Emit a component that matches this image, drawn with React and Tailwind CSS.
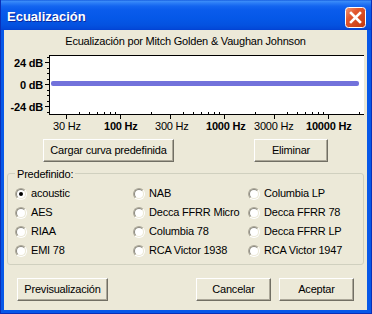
import React from "react";

const fx = (f) => 116 + 104 * Math.log10(f / 100);
const MAJOR = [30, 100, 300, 1000, 3000, 10000];
const MINOR = [40, 50, 60, 70, 80, 90, 200, 400, 500, 600, 700, 800, 900, 2000, 4000, 5000, 6000, 7000, 8000, 9000, 20000];
const LEFT_MAJOR = [8, 30, 52];
const LEFT_MINOR = [3, 14, 19, 25, 36, 41, 47, 58];

function Chart() {
  return (
    <div className="relative mt-[6px] h-[80px]">
      <svg width="363" height="80" className="absolute left-0 top-0">
        <rect x="45" y="1" width="315" height="60" fill="#fff" />
        <rect x="45" y="1" width="315" height="1" fill="#000" />
        <rect x="45" y="1" width="1" height="60" fill="#000" />
        <rect x="45" y="60" width="315" height="1" fill="#000" />
        {LEFT_MAJOR.map((y) => (
          <rect key={"lm" + y} x="41" y={y} width="4" height="1" fill="#000" />
        ))}
        {LEFT_MINOR.map((y) => (
          <rect key={"ln" + y} x="43" y={y} width="2" height="1" fill="#000" />
        ))}
        {MAJOR.map((f) => (
          <rect key={"bm" + f} x={Math.round(fx(f))} y="61" width="1" height="4" fill="#000" />
        ))}
        {MINOR.map((f) => (
          <rect key={"bn" + f} x={Math.round(fx(f))} y="58" width="1" height="2" fill="#000" />
        ))}
        <rect x="47" y="27" width="308" height="5" rx="2" fill="#7272DB" />
      </svg>
      <div className="absolute left-0 top-0 w-[39px] flex flex-col items-end font-bold leading-[13px]">
        <span className="mt-[3px]">24 dB</span>
        <span className="mt-[9px]">0 dB</span>
        <span className="mt-[9px]">-24 dB</span>
      </div>
      <span className="absolute top-[66px] left-[49px] leading-[13px]">30 Hz</span>
      <span className="absolute top-[66px] left-[100px] leading-[13px] font-bold">100 Hz</span>
      <span className="absolute top-[66px] left-[151px] leading-[13px]">300 Hz</span>
      <span className="absolute top-[66px] left-[202px] leading-[13px] font-bold">1000 Hz</span>
      <span className="absolute top-[66px] left-[250px] leading-[13px]">3000 Hz</span>
      <span className="absolute top-[66px] left-[302px] leading-[13px] font-bold">10000 Hz</span>
    </div>
  );
}

function Btn({ children, className }) {
  return (
    <div
      className={
        "h-[23px] flex items-center justify-center bg-[#ECE9D8] border border-t-white border-l-white border-r-[#716F64] border-b-[#716F64] shadow-[inset_-1px_-1px_0_#ACA899] " +
        className
      }
    >
      {children}
    </div>
  );
}

function Radio({ label, checked }) {
  return (
    <div className="flex items-center gap-[4px] h-[19px] whitespace-nowrap">
      <span className="w-[12px] h-[12px] shrink-0 rounded-full border border-t-[#ACA899] border-l-[#ACA899] border-b-white border-r-white flex">
        <span className="flex-1 rounded-full border border-t-[#8A887E] border-l-[#8A887E] border-b-[#ECE9D8] border-r-[#ECE9D8] bg-white flex items-center justify-center">
          {checked && <span className="w-[4px] h-[4px] rounded-full bg-black" />}
        </span>
      </span>
      <span>{label}</span>
    </div>
  );
}

const PRESETS = [
  "acoustic", "NAB", "Columbia LP",
  "AES", "Decca FFRR Micro", "Decca FFRR 78",
  "RIAA", "Columbia 78", "Decca FFRR LP",
  "EMI 78", "RCA Victor 1938", "RCA Victor 1947",
];

export default function App() {
  return (
    <div className="w-[372px] h-[314px] flex flex-col bg-[#0758E8] border-x border-b border-[#0A2FB8] font-['Liberation_Sans',Arial,sans-serif] text-[11px] tracking-[-0.2px] text-black overflow-hidden">
      <div className="h-[30px] shrink-0 flex items-center pt-[4px] pl-[6px] pr-[5px] bg-[linear-gradient(to_bottom,#0A4FD8_0px,#3D8EF9_1px,#2B7DF6_3px,#1466F0_6px,#0A5CEC_10px,#0558E8_18px,#0452E0_25px,#0348D8_29px,#0340D0_30px)]">
        <span className="text-white font-bold text-[13px] tracking-normal [text-shadow:1px_1px_0_#0B2A9E]">
          Ecualización
        </span>
        <svg width="21" height="21" viewBox="0 0 21 21" className="ml-auto">
          <defs>
            <linearGradient id="cb" x1="0" y1="0" x2="1" y2="1">
              <stop offset="0" stopColor="#F09A78" />
              <stop offset="0.35" stopColor="#E2582F" />
              <stop offset="1" stopColor="#C1380E" />
            </linearGradient>
          </defs>
          <rect x="0.5" y="0.5" width="20" height="20" rx="3" fill="url(#cb)" stroke="#fff" />
          <path d="M6 6 L15 15 M15 6 L6 15" stroke="#fff" strokeWidth="2.6" strokeLinecap="square" />
        </svg>
      </div>
      <div className="flex-1 ml-[3px] mr-[4px] mb-[3px] bg-[#ECE9D8] flex flex-col">
        <div className="mt-[4px] h-[14px] leading-[14px] text-center">
          Ecualización por Mitch Golden &amp; Vaughan Johnson
        </div>
        <Chart />
        <div className="mt-[5px] flex justify-between px-[39px]">
          <Btn className="w-[131px]">Cargar curva predefinida</Btn>
          <Btn className="w-[74px]">Eliminar</Btn>
        </div>
        <div className="relative mt-[11px] mx-[3px] h-[92px] border border-[#D0D0BF] rounded-[3px] pt-[10px] pl-[7px]">
          <span className="absolute left-[7px] top-[-6px] px-[2px] bg-[#ECE9D8] leading-[13px]">Predefinido:</span>
          <div className="grid grid-cols-[118px_115px_1fr]">
            {PRESETS.map((p) => (
              <Radio key={p} label={p} checked={p === "acoustic"} />
            ))}
          </div>
        </div>
        <div className="mt-[13px] flex px-[13px]">
          <Btn className="w-[91px]">Previsualización</Btn>
          <Btn className="w-[75px] ml-auto">Cancelar</Btn>
          <Btn className="w-[75px] ml-[8px]">Aceptar</Btn>
        </div>
      </div>
    </div>
  );
}
